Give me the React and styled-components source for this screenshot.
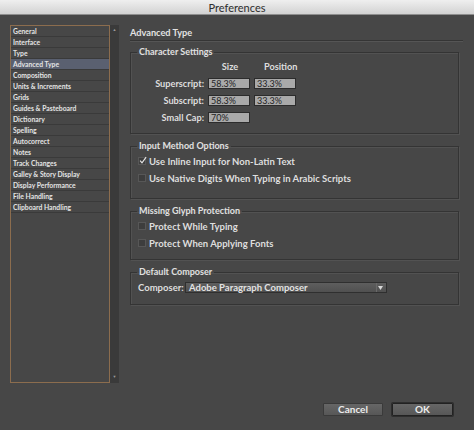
import React from "react";
import styled, { createGlobalStyle } from "styled-components";

const GlobalStyle = createGlobalStyle`
  html, body {
    margin: 0;
    padding: 0;
    background: #474747;
  }
  * { box-sizing: border-box; }
`;

const categories = [
  "General",
  "Interface",
  "Type",
  "Advanced Type",
  "Composition",
  "Units & Increments",
  "Grids",
  "Guides & Pasteboard",
  "Dictionary",
  "Spelling",
  "Autocorrect",
  "Notes",
  "Track Changes",
  "Galley & Story Display",
  "Display Performance",
  "File Handling",
  "Clipboard Handling",
];

const App = () => {
  return (
    <Window>
      <GlobalStyle />
      <TitleBar>Preferences</TitleBar>
      <Body>
        <Sidebar>
          <CategoryList>
            {categories.map((c) => (
              <CategoryItem key={c} $active={c === "Advanced Type"}>
                {c}
              </CategoryItem>
            ))}
          </CategoryList>
          <ScrollTrack>
            <ScrollArrow>▲</ScrollArrow>
            <ScrollArrow>▼</ScrollArrow>
          </ScrollTrack>
        </Sidebar>

        <Content>
          <PanelTitle>Advanced Type</PanelTitle>

          <Group $top={6}>
            <Legend>Character Settings</Legend>
            <CharGrid>
              <span />
              <ColHead $shift={2}>Size</ColHead>
              <ColHead $shift={10}>Position</ColHead>

              <RowLabel>Superscript:</RowLabel>
              <Field>58.3%</Field>
              <Field>33.3%</Field>

              <RowLabel>Subscript:</RowLabel>
              <Field>58.3%</Field>
              <Field>33.3%</Field>

              <RowLabel>Small Cap:</RowLabel>
              <Field>70%</Field>
              <span />
            </CharGrid>
          </Group>

          <Group $top={7}>
            <Legend>Input Method Options</Legend>
            <CheckList $bottom={15}>
              <CheckRow>
                <Box $checked>
                  <svg width="9" height="9" viewBox="0 0 9 9">
                    <path d="M1.2 4.6 L3.4 7.2 L8 0.8" fill="none" stroke="#e6e6e6" strokeWidth="1.3" />
                  </svg>
                </Box>
                Use Inline Input for Non-Latin Text
              </CheckRow>
              <CheckRow>
                <Box />
                Use Native Digits When Typing in Arabic Scripts
              </CheckRow>
            </CheckList>
          </Group>

          <Group $top={7}>
            <Legend>Missing Glyph Protection</Legend>
            <CheckList $bottom={11}>
              <CheckRow>
                <Box />
                Protect While Typing
              </CheckRow>
              <CheckRow>
                <Box />
                Protect When Applying Fonts
              </CheckRow>
            </CheckList>
          </Group>

          <Group $top={7}>
            <Legend>Default Composer</Legend>
            <ComposerRow>
              <ComposerLabel>Composer:</ComposerLabel>
              <Dropdown>
                <span>Adobe Paragraph Composer</span>
                <DropArrow>
                  <svg width="5" height="4" viewBox="0 0 5 4">
                    <path d="M0 0 H5 L2.5 4 Z" fill="#d8d8d8" />
                  </svg>
                </DropArrow>
              </Dropdown>
            </ComposerRow>
          </Group>

          <Footer>
            <Button>Cancel</Button>
            <Button $primary>OK</Button>
          </Footer>
        </Content>
      </Body>
    </Window>
  );
};

const Window = styled.div`
  width: 474px;
  height: 430px;
  display: flex;
  flex-direction: column;
  background: #474747;
  font-family: Lato, "Liberation Sans", sans-serif;
  color: #dedede;
  overflow: hidden;
`;

const TitleBar = styled.div`
  height: 15px;
  flex-shrink: 0;
  display: flex;
  align-items: center;
  justify-content: center;
  background: linear-gradient(#efefef, #d2d2d2);
  border-bottom: 1px solid #8e8e8e;
  color: #2e2e2e;
  font-size: 11px;
`;

const Body = styled.div`
  flex: 1;
  display: flex;
  padding: 10px 0 14px 10px;
`;

const Sidebar = styled.div`
  display: flex;
  height: 358px;
  flex-shrink: 0;
`;

const CategoryList = styled.div`
  width: 100px;
  height: 100%;
  border: 1px solid #8c6d4e;
  background: #474747;
  display: flex;
  flex-direction: column;
`;

const CategoryItem = styled.div`
  height: 11px;
  line-height: 10px;
  padding-left: 2px;
  font-size: 6.8px;
  font-weight: 700;
  white-space: nowrap;
  color: #e4e4e4;
  border-bottom: 1px solid #3a3a3a;
  background: ${(p) => (p.$active ? "#5a6070" : "transparent")};
`;

const ScrollTrack = styled.div`
  width: 9px;
  height: 100%;
  background: #3a3a3a;
  display: flex;
  flex-direction: column;
  justify-content: space-between;
  align-items: center;
  padding: 2px 0 3px;
`;

const ScrollArrow = styled.span`
  font-size: 4px;
  color: #9a9a9a;
  line-height: 6px;
`;

const Content = styled.div`
  margin-left: 11px;
  width: 333px;
  display: flex;
  flex-direction: column;
`;

const PanelTitle = styled.div`
  height: 16px;
  line-height: 15px;
  font-size: 9.2px;
  font-weight: 700;
  color: #e2e2e2;
  border-bottom: 1px solid #353535;
  box-shadow: 0 1px 0 #555555;
`;

const Group = styled.fieldset`
  margin: ${(p) => p.$top}px 4px 0 0;
  padding: 0;
  min-width: 0;
  border: 1px solid #343434;
  box-shadow: inset 1px 1px 0 #525252, 1px 1px 0 #525252;
`;

const Legend = styled.legend`
  margin-left: 6px;
  padding: 0 2px;
  font-size: 9px;
  line-height: 10px;
  font-weight: 700;
  color: #e0e0e0;
`;

const CharGrid = styled.div`
  display: grid;
  grid-template-columns: 68px 42px 42px;
  grid-auto-rows: 11px;
  column-gap: 4px;
  row-gap: 6px;
  padding: 4px 0 10px 5px;
  font-size: 9.2px;
  font-weight: 700;
`;

const ColHead = styled.div`
  text-align: center;
  line-height: 11px;
  padding-left: ${(p) => p.$shift}px;
  margin-bottom: 1px;
`;

const RowLabel = styled.div`
  text-align: right;
  line-height: 11px;
  white-space: nowrap;
`;

const Field = styled.div`
  height: 11px;
  background: #a9a9a9;
  border: 1px solid #2c2c2c;
  color: #1f1f1f;
  font-weight: 400;
  font-size: 9px;
  line-height: 9px;
  padding-left: 2px;
`;

const CheckList = styled.div`
  display: flex;
  flex-direction: column;
  gap: 7px;
  padding: 5px 0 ${(p) => p.$bottom}px 7px;
`;

const CheckRow = styled.div`
  display: flex;
  align-items: center;
  gap: 3px;
  height: 10px;
  font-size: 9.5px;
  font-weight: 700;
  white-space: nowrap;
`;

const Box = styled.span`
  width: 8px;
  height: 8px;
  flex-shrink: 0;
  display: flex;
  align-items: center;
  justify-content: center;
  background: #3d3d3d;
  border: 1px solid #575757;
  svg { margin: -2px -2px 0 0; }
`;

const ComposerRow = styled.div`
  display: flex;
  align-items: center;
  gap: 3px;
  padding: 5px 0 11px 7px;
  font-size: 9.5px;
  font-weight: 700;
`;

const ComposerLabel = styled.span`
  width: 44px;
  white-space: nowrap;
`;

const Dropdown = styled.div`
  width: 202px;
  height: 11px;
  display: flex;
  align-items: center;
  justify-content: space-between;
  padding-left: 3px;
  background: linear-gradient(#5e5e5e, #505050);
  border: 1px solid #2f2f2f;
  color: #e2e2e2;
  font-size: 9.5px;
  line-height: 9px;
`;

const DropArrow = styled.span`
  width: 8px;
  height: 100%;
  display: flex;
  align-items: center;
  justify-content: center;
  border-left: 1px solid #6a6a6a;
  margin-right: 2px;
`;

const Footer = styled.div`
  margin-top: auto;
  display: flex;
  justify-content: flex-end;
  gap: 9px;
  padding-right: 10px;
`;

const Button = styled.button`
  width: ${(p) => (p.$primary ? 61 : 60)}px;
  height: 13px;
  padding: 0;
  font-family: inherit;
  font-size: 10px;
  line-height: 11px;
  font-weight: 700;
  color: #ececec;
  background: linear-gradient(#666666, #575757);
  border: 1px solid ${(p) => (p.$primary ? "#222222" : "#3a3a3a")};
  box-shadow: ${(p) => (p.$primary ? "0 0 0 1px #2e2e2e" : "none")};
  border-radius: 1px;
`;

export default App;
